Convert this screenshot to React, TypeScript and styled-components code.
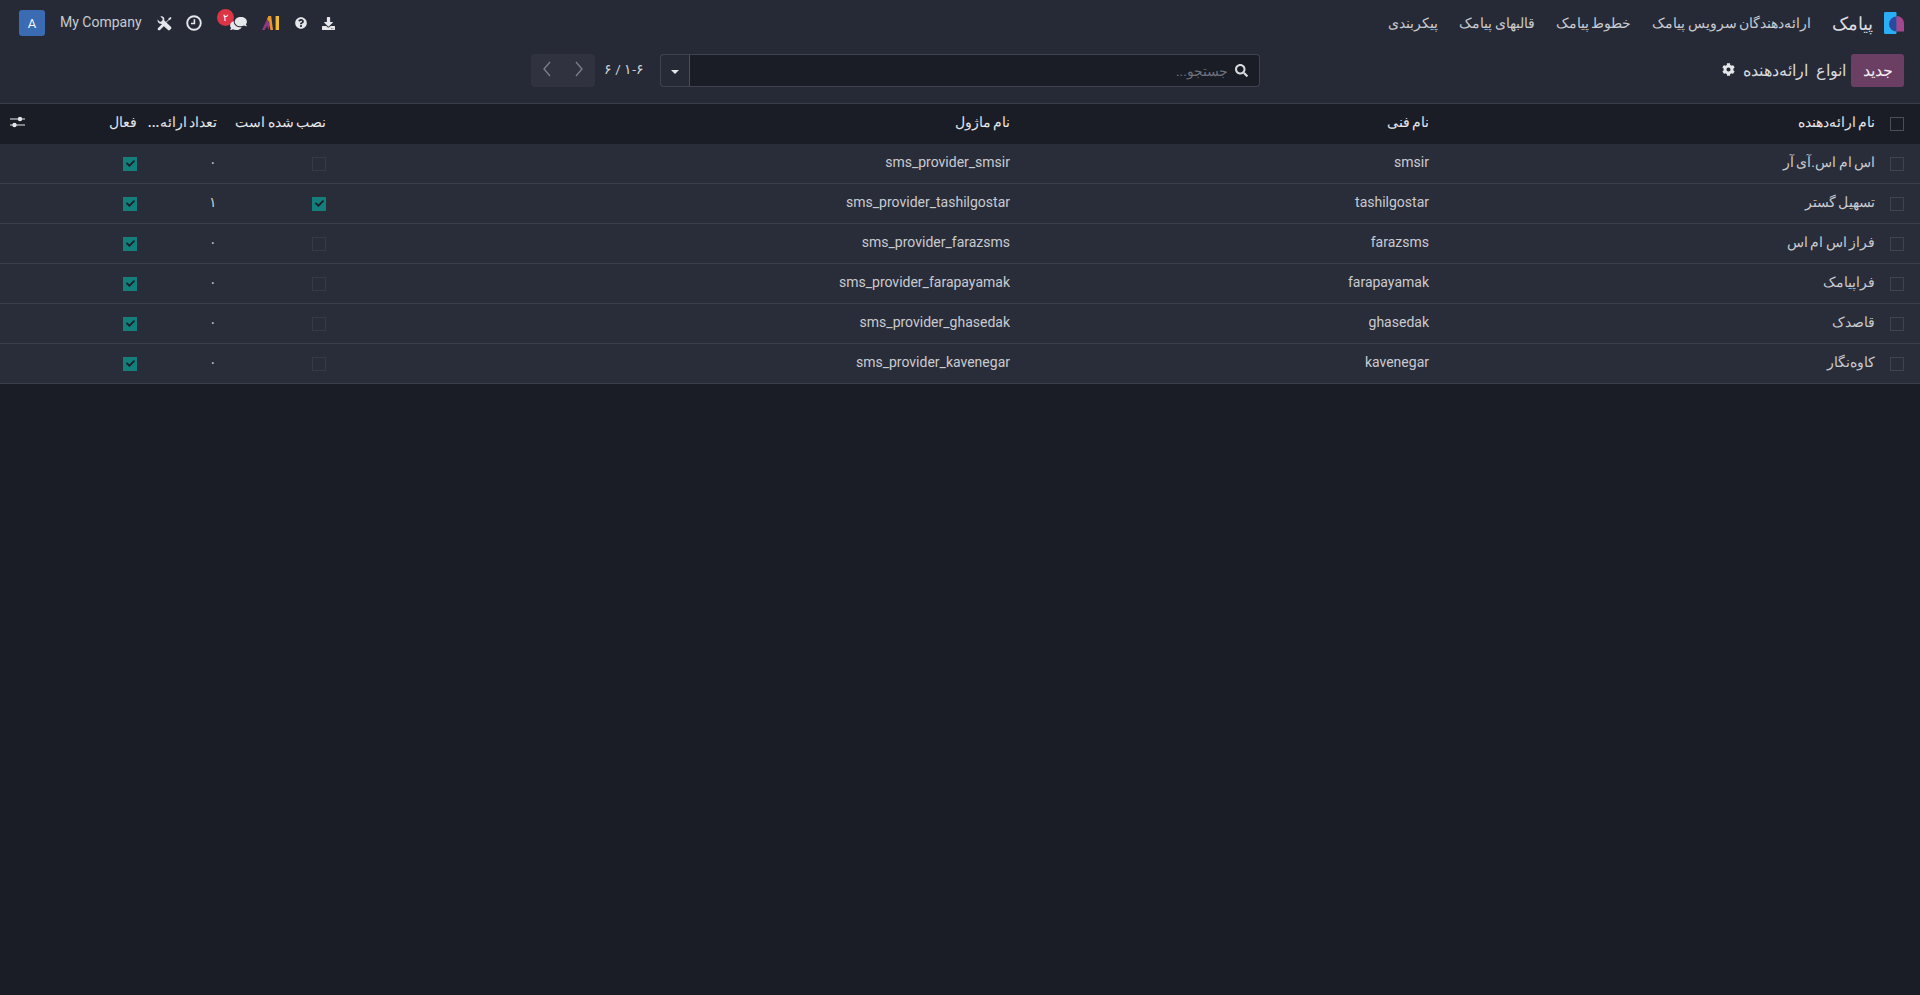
import styled, { createGlobalStyle } from "styled-components";
import { FaCog, FaComments, FaDownload, FaQuestionCircle, FaSearch, FaCheck } from "react-icons/fa";

const GlobalStyle = createGlobalStyle`
  html, body {
    margin: 0;
    padding: 0;
    height: 100%;
    background: #1b1d26;
  }
  * { box-sizing: border-box; }
  #root { height: 100%; }
`;

const providers = [
  { name: "اس ام اس.آی آر", tech: "smsir", module: "sms_provider_smsir", installed: false, count: "۰" },
  { name: "تسهیل گستر", tech: "tashilgostar", module: "sms_provider_tashilgostar", installed: true, count: "۱" },
  { name: "فراز اس ام اس", tech: "farazsms", module: "sms_provider_farazsms", installed: false, count: "۰" },
  { name: "فراپیامک", tech: "farapayamak", module: "sms_provider_farapayamak", installed: false, count: "۰" },
  { name: "قاصدک", tech: "ghasedak", module: "sms_provider_ghasedak", installed: false, count: "۰" },
  { name: "کاوه‌نگار", tech: "kavenegar", module: "sms_provider_kavenegar", installed: false, count: "۰" },
];

const menus = ["ارائه‌دهندگان سرویس پیامک", "خطوط پیامک", "قالبهای پیامک", "پیکربندی"];

const App = () => (
  <Page dir="rtl">
    <GlobalStyle />
    <NavBar>
      <NavGroup>
        <AppLogo viewBox="0 0 20 22">
          <rect x="0" y="0" width="12.5" height="22" rx="1.2" fill="#2aaef5" />
          <path d="M12.5 4.5a7.5 7.5 0 0 0 0 15z" fill="#2a4aa0" />
          <path d="M12.5 4c4 0 7.5 3 7.5 7.5v8h-7.5z" fill="#a5478f" />
        </AppLogo>
        <Brand>پیامک</Brand>
        {menus.map((m) => (
          <MenuItem key={m}>{m}</MenuItem>
        ))}
      </NavGroup>
      <NavGroup dir="ltr">
        <Avatar>A</Avatar>
        <CompanyName>My Company</CompanyName>
        <ToolsIcon viewBox="0 0 16 16">
          <path d="M.6 3.6 3 6h1.3L6 4.3V3L3.6.6C5.6-.2 7.6 1 7.8 3c0 .5 0 1-.2 1.4l7.4 7.4c.5.5.5 1.3 0 1.8l-1.4 1.4c-.5.5-1.3.5-1.8 0L4.4 8.2C2.4 8.6.2 6.3.6 3.6z" />
          <path d="M1.2 12.8 6 8l2 2-4.8 4.8c-.6.6-1.4.6-2 0s-.6-1.4 0-2zM9.5 6.5 12 4l.5-1.5L14.5 1l1 1-1.5 2-1.5.5L10 7z" />
        </ToolsIcon>
        <ClockIcon viewBox="0 0 16 16">
          <circle cx="8" cy="8" r="6.8" fill="none" stroke="currentColor" strokeWidth="1.9" />
          <path d="M8.4 4.2v4.3H5" fill="none" stroke="currentColor" strokeWidth="1.6" />
        </ClockIcon>
        <ChatWrap>
          <ChatBadge>۲</ChatBadge>
          <ChatIcon />
        </ChatWrap>
        <AiLogo viewBox="0 0 18 14">
          <path d="M0 14 5 3.2 8 8.6 6.4 14 5.2 9.8 2.6 14z" fill="#8e3a7e" />
          <path d="M6.4 0h2.8L11 14H8.4L7.2 6 5 3.2z" fill="#e8962c" />
          <rect x="13.6" y="0" width="3.4" height="14" fill="#f2bb2e" />
        </AiLogo>
        <HelpIcon />
        <DownloadIcon />
      </NavGroup>
    </NavBar>
    <ControlPanel>
      <TitleBlock>
        <NewButton>جدید</NewButton>
        <PageTitle>انواع ارائه‌دهنده</PageTitle>
        <GearIcon />
      </TitleBlock>
      <SearchBox>
        <SearchField>
          <SearchGlass />
          <SearchPlaceholder>جستجو...</SearchPlaceholder>
        </SearchField>
        <SearchToggle>
          <Caret />
        </SearchToggle>
      </SearchBox>
      <PagerBlock>
        <PagerValue>۱-۶ / ۶</PagerValue>
        <PagerButtons>
          <Chevron viewBox="0 0 10 16">
            <path d="M2 1l6 7-6 7" />
          </Chevron>
          <Chevron viewBox="0 0 10 16">
            <path d="M8 1 2 8l6 7" />
          </Chevron>
        </PagerButtons>
      </PagerBlock>
    </ControlPanel>
    <ListTable>
      <colgroup>
        <col width={37} />
        <col width={446} />
        <col width={419} />
        <col width={684} />
        <col width={109} />
        <col width={80} />
        <col width={145} />
      </colgroup>
      <thead>
        <tr>
          <HeadSelect>
            <Box $tone="header" />
          </HeadSelect>
          <HeadCell>نام ارائه‌دهنده</HeadCell>
          <HeadCell>نام فنی</HeadCell>
          <HeadCell>نام ماژول</HeadCell>
          <HeadCell>نصب شده است</HeadCell>
          <HeadCell>تعداد ارائه...</HeadCell>
          <HeadCell>
            <HeadSplit>
              <span>فعال</span>
              <SlidersIcon viewBox="0 0 15 12">
                <path d="M0 3h15M0 9h15" stroke="currentColor" strokeWidth="1.2" />
                <circle cx="10" cy="3" r="2.2" fill="currentColor" />
                <circle cx="4.5" cy="9" r="2.2" fill="currentColor" />
              </SlidersIcon>
            </HeadSplit>
          </HeadCell>
        </tr>
      </thead>
      <tbody>
        {providers.map((p) => (
          <Row key={p.tech}>
            <SelectCell>
              <Box $tone="row" />
            </SelectCell>
            <Cell>{p.name}</Cell>
            <Cell>{p.tech}</Cell>
            <Cell>{p.module}</Cell>
            <BoxCell>
              {p.installed ? (
                <Box $tone="checked">
                  <FaCheck />
                </Box>
              ) : (
                <Box $tone="readonly" />
              )}
            </BoxCell>
            <Cell>{p.count}</Cell>
            <BoxCell>
              <Box $tone="checked">
                <FaCheck />
              </Box>
            </BoxCell>
          </Row>
        ))}
      </tbody>
    </ListTable>
  </Page>
);

export default App;

const Page = styled.div`
  min-height: 100%;
  background: #1b1d26;
  color: #d1d3d9;
  font-family: Roboto, "Noto Sans", sans-serif;
  font-size: 14px;
`;

const NavBar = styled.header`
  height: 46px;
  background: #262a36;
  display: flex;
  align-items: center;
  justify-content: space-between;
  padding: 0 16px;
`;

const NavGroup = styled.nav`
  display: flex;
  align-items: center;
`;

const AppLogo = styled.svg`
  width: 20px;
  height: 22px;
  margin-left: 11px;
`;

const Brand = styled.span`
  font-size: 18px;
  color: #dcdde1;
  margin-left: 21px;
`;

const MenuItem = styled.span`
  font-size: 14px;
  word-spacing: -1px;
  color: #c9cbd1;
  margin-left: 21px;
`;

const Avatar = styled.span`
  width: 26px;
  height: 26px;
  margin-left: 3px;
  border-radius: 3px;
  background: #3a6bb3;
  color: #f4f6fa;
  font-size: 13px;
  display: flex;
  align-items: center;
  justify-content: center;
`;

const CompanyName = styled.span`
  margin-left: 15px;
  font-size: 14px;
  color: #c9cbd1;
  padding-bottom: 2px;
`;

const ToolsIcon = styled.svg`
  width: 15px;
  height: 15px;
  margin-left: 15px;
  fill: #e6e7ea;
`;

const ClockIcon = styled.svg`
  width: 16px;
  height: 16px;
  margin-left: 14px;
  color: #e6e7ea;
`;

const ChatWrap = styled.span`
  position: relative;
  display: flex;
  margin-left: 28px;
`;

const ChatIcon = styled(FaComments)`
  width: 17px;
  height: 15px;
  color: #e6e7ea;
  transform: scaleX(-1);
`;

const ChatBadge = styled.span`
  position: absolute;
  left: -13px;
  top: -7px;
  width: 17px;
  height: 17px;
  border-radius: 50%;
  background: #dc3545;
  color: #fff;
  font-size: 10px;
  display: flex;
  align-items: center;
  justify-content: center;
`;

const AiLogo = styled.svg`
  width: 18px;
  height: 14px;
  margin-left: 15px;
`;

const HelpIcon = styled(FaQuestionCircle)`
  width: 12px;
  height: 12px;
  margin-left: 15px;
  color: #e6e7ea;
`;

const DownloadIcon = styled(FaDownload)`
  width: 13px;
  height: 13px;
  margin-left: 15px;
  color: #e6e7ea;
`;

const ControlPanel = styled.section`
  height: 58px;
  background: #262a36;
  border-bottom: 1px solid #3a3e4a;
  display: grid;
  grid-template-columns: 660px 600px 1fr;
  align-items: start;
  padding-top: 8px;
`;

const TitleBlock = styled.div`
  display: flex;
  align-items: center;
  padding-right: 16px;
`;

const NewButton = styled.button`
  height: 33px;
  width: 53px;
  border: none;
  border-radius: 3px;
  background: #6b3f64;
  color: #f2eef1;
  font: inherit;
  font-size: 16px;
  padding: 0;
`;

const PageTitle = styled.h1`
  margin: 0 5px 0 8px;
  font-size: 16px;
  font-weight: 400;
  word-spacing: 4px;
  color: #d8dade;
`;

const GearIcon = styled(FaCog)`
  width: 13px;
  height: 13px;
  color: #e6e7ea;
  margin-bottom: 3px;
`;

const SearchBox = styled.div`
  height: 33px;
  display: flex;
`;

const SearchField = styled.div`
  flex: 1;
  background: #1b1d26;
  border: 1px solid #3f4350;
  border-left-color: #4a4e5a;
  border-radius: 0 4px 4px 0;
  display: flex;
  align-items: center;
  padding-right: 11px;
`;

const SearchGlass = styled(FaSearch)`
  width: 13px;
  height: 13px;
  color: #d8dade;
  margin-left: 7px;
`;

const SearchPlaceholder = styled.span`
  color: #6d717d;
  font-size: 14px;
`;

const SearchToggle = styled.div`
  width: 29px;
  background: #262a36;
  border: 1px solid #3f4350;
  border-right: none;
  border-radius: 4px 0 0 4px;
  display: flex;
  align-items: center;
  justify-content: center;
`;

const Caret = styled.span`
  width: 0;
  height: 0;
  margin-top: 3px;
  border-top: 4px solid #e6e7ea;
  border-left: 4px solid transparent;
  border-right: 4px solid transparent;
`;

const PagerBlock = styled.div`
  display: flex;
  align-items: center;
  height: 33px;
  padding-right: 16px;
`;

const PagerValue = styled.span`
  font-size: 13.5px;
  color: #d1d3d9;
  margin-left: 9px;
  padding-bottom: 3px;
`;

const PagerButtons = styled.div`
  width: 64px;
  height: 33px;
  border-radius: 4px;
  background: #30333f;
  display: flex;
  align-items: center;
  justify-content: space-around;
  padding-bottom: 3px;
`;

const Chevron = styled.svg`
  width: 10px;
  height: 16px;
  fill: none;
  stroke: #7d808b;
  stroke-width: 1.3;
`;

const ListTable = styled.table`
  width: 100%;
  table-layout: fixed;
  border-collapse: separate;
  border-spacing: 0;
`;

const HeadCell = styled.th`
  height: 40px;
  padding: 0 8px 4px;
  background: #1b1d26;
  color: #e6e7ea;
  font-size: 14px;
  font-weight: 500;
  word-spacing: -1px;
  text-align: right;
  white-space: nowrap;
`;

const HeadSelect = styled.th`
  height: 40px;
  padding: 0 16px 0 0;
  background: #1b1d26;
`;

const HeadSplit = styled.div`
  display: flex;
  align-items: center;
  justify-content: space-between;
  padding-left: 2px;
`;

const SlidersIcon = styled.svg`
  width: 15px;
  height: 12px;
`;

const Row = styled.tr`
  background: #292d39;
`;

const Cell = styled.td`
  height: 40px;
  padding: 0 8px 4px;
  border-bottom: 1px solid #3a3e4a;
  color: #c9cbd1;
  font-size: 14px;
  word-spacing: -1px;
  text-align: right;
  white-space: nowrap;
`;

const BoxCell = styled.td`
  height: 40px;
  padding: 0 8px;
  border-bottom: 1px solid #3a3e4a;
`;

const SelectCell = styled.td`
  height: 40px;
  padding: 0 16px 0 0;
  border-bottom: 1px solid #3a3e4a;
`;

const toneStyles = {
  header: "border: 1px solid #4a4e5a;",
  row: "border: 1px solid #3f4350;",
  readonly: "border: 1px solid #363a46;",
  checked: "background: #147f7a; border: 1px solid #147f7a;",
};

const Box = styled.span<{ $tone: keyof typeof toneStyles }>`
  display: flex;
  align-items: center;
  justify-content: center;
  width: 14px;
  height: 14px;
  color: #1b1d26;
  ${(p) => toneStyles[p.$tone]}

  svg {
    width: 9px;
    height: 9px;
  }
`;
